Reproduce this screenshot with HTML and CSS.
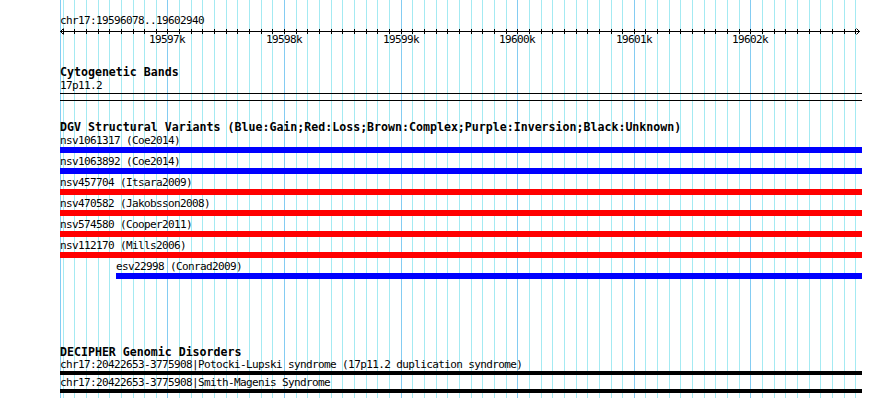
FILE: index.html
```html
<!DOCTYPE html>
<html>

<head>
  <meta charset="UTF-8">
  <title>chr17:19596078..19602940</title>
  <link rel="stylesheet" href="styles.css">
</head>

<body>
  <div class="canvas">
    <!-- grid: one line per 100 bp, darker every 1 kb -->
    <svg class="grid" width="890" height="398">
      <path class="grid-minor" d="M63.5 0V398M74.5 0V398M86.5 0V398M98.5 0V398M109.5 0V398M121.5 0V398M133.5 0V398M144.5 0V398M156.5 0V398M179.5 0V398M191.5 0V398M202.5 0V398M214.5 0V398M226.5 0V398M237.5 0V398M249.5 0V398M261.5 0V398M272.5 0V398M296.5 0V398M307.5 0V398M319.5 0V398M331.5 0V398M342.5 0V398M354.5 0V398M366.5 0V398M377.5 0V398M389.5 0V398M412.5 0V398M424.5 0V398M436.5 0V398M447.5 0V398M459.5 0V398M471.5 0V398M482.5 0V398M494.5 0V398M506.5 0V398M529.5 0V398M541.5 0V398M552.5 0V398M564.5 0V398M576.5 0V398M587.5 0V398M599.5 0V398M611.5 0V398M622.5 0V398M645.5 0V398M657.5 0V398M669.5 0V398M680.5 0V398M692.5 0V398M704.5 0V398M715.5 0V398M727.5 0V398M739.5 0V398M762.5 0V398M774.5 0V398M785.5 0V398M797.5 0V398M809.5 0V398M820.5 0V398M832.5 0V398M844.5 0V398M855.5 0V398" />
      <path class="grid-major" d="M60.5 0V398M167.5 0V398M284.5 0V398M401.5 0V398M517.5 0V398M634.5 0V398M750.5 0V398" />
    </svg>

    <div class="panel">
      <div class="ruler-name">chr17:19596078..19602940</div>
      <svg class="ruler" width="802" height="20">
        <path class="ruler-line" d="M0 5.5H800" />
        <path class="ruler-line" d="M3.5 3V8M14.5 3V8M26.5 3V8M38.5 3V8M49.5 3V8M61.5 3V8M73.5 3V8M84.5 3V8M96.5 3V8M107.5 3V8M119.5 3V8M131.5 3V8M142.5 3V8M154.5 3V8M166.5 3V8M177.5 3V8M189.5 3V8M201.5 3V8M212.5 3V8M224.5 3V8M236.5 3V8M247.5 3V8M259.5 3V8M271.5 3V8M282.5 3V8M294.5 3V8M306.5 3V8M317.5 3V8M329.5 3V8M341.5 3V8M352.5 3V8M364.5 3V8M376.5 3V8M387.5 3V8M399.5 3V8M411.5 3V8M422.5 3V8M434.5 3V8M446.5 3V8M457.5 3V8M469.5 3V8M481.5 3V8M492.5 3V8M504.5 3V8M516.5 3V8M527.5 3V8M539.5 3V8M551.5 3V8M562.5 3V8M574.5 3V8M585.5 3V8M597.5 3V8M609.5 3V8M620.5 3V8M632.5 3V8M644.5 3V8M655.5 3V8M667.5 3V8M679.5 3V8M690.5 3V8M702.5 3V8M714.5 3V8M725.5 3V8M737.5 3V8M749.5 3V8M760.5 3V8M772.5 3V8M784.5 3V8M795.5 3V8" />
        <path class="ruler-line" d="M3.5 2.5L0.5 5.5L3.5 8.5M796.5 2.5L799.5 5.5L796.5 8.5" />
        <text class="ruler-label" x="89" y="17">19597k</text>
        <text class="ruler-label" x="206" y="17">19598k</text>
        <text class="ruler-label" x="323" y="17">19599k</text>
        <text class="ruler-label" x="439" y="17">19600k</text>
        <text class="ruler-label" x="556" y="17">19601k</text>
        <text class="ruler-label" x="672" y="17">19602k</text>
      </svg>

      <section class="track track-bands">
        <h2 class="track-title">Cytogenetic Bands</h2>
        <div class="feature-label">17p11.2</div>
        <div class="band"></div>
      </section>

      <section class="track track-dgv">
        <h2 class="track-title">DGV Structural Variants (Blue:Gain;Red:Loss;Brown:Complex;Purple:Inversion;Black:Unknown)</h2>
        <div class="features">
          <div class="feature">
            <div class="feature-label">nsv1061317 (Coe2014)</div>
            <div class="bar bar-gain"></div>
          </div>
          <div class="feature">
            <div class="feature-label">nsv1063892 (Coe2014)</div>
            <div class="bar bar-gain"></div>
          </div>
          <div class="feature">
            <div class="feature-label">nsv457704 (Itsara2009)</div>
            <div class="bar bar-loss"></div>
          </div>
          <div class="feature">
            <div class="feature-label">nsv470582 (Jakobsson2008)</div>
            <div class="bar bar-loss"></div>
          </div>
          <div class="feature">
            <div class="feature-label">nsv574580 (Cooper2011)</div>
            <div class="bar bar-loss"></div>
          </div>
          <div class="feature">
            <div class="feature-label">nsv112170 (Mills2006)</div>
            <div class="bar bar-loss"></div>
          </div>
          <div class="feature" style="margin-left: 56px">
            <div class="feature-label">esv22998 (Conrad2009)</div>
            <div class="bar bar-gain"></div>
          </div>
        </div>
      </section>

      <section class="track track-decipher">
        <h2 class="track-title">DECIPHER Genomic Disorders</h2>
        <div class="features">
          <div class="feature">
            <div class="feature-label">chr17:20422653-3775908|Potocki-Lupski syndrome (17p11.2 duplication syndrome)</div>
            <div class="bar bar-disorder"></div>
          </div>
          <div class="feature">
            <div class="feature-label">chr17:20422653-3775908|Smith-Magenis Syndrome</div>
            <div class="bar bar-disorder"></div>
          </div>
        </div>
      </section>
    </div>
  </div>
</body>

</html>
```

FILE: styles.css
```css
body {
  margin: 0;
  background-color: #ffffff;
}

.canvas {
  position: relative;
  width: 890px;
  height: 398px;
  overflow: hidden;
  font-family: "DejaVu Sans Mono", "Liberation Mono", monospace;
  color: #000000;
}

.grid {
  position: absolute;
  left: 0;
  top: 0;
}

.grid-minor {
  stroke: #a4eaf2;
  stroke-width: 1;
  fill: none;
}

.grid-major {
  stroke: #84ccf2;
  stroke-width: 1;
  fill: none;
}

.panel {
  position: relative;
  margin-left: 60px;
  width: 802px;
  padding-top: 15px;
}

.ruler-name {
  font-size: 11px;
  letter-spacing: -0.62px;
  line-height: 11px;
  height: 11px;
}

.ruler {
  display: block;
}

.ruler-line {
  stroke: #000000;
  stroke-width: 1;
  fill: none;
}

.ruler-label {
  font-family: "DejaVu Sans Mono", "Liberation Mono", monospace;
  font-size: 11px;
  letter-spacing: -0.62px;
  fill: #000000;
}

.track {
  margin-top: 20px;
}

.track-decipher {
  margin-top: 67px;
}

.track-title {
  margin: 0;
  font-size: 11.6px;
  font-weight: bold;
  line-height: 12px;
  white-space: nowrap;
}

.feature-label {
  font-size: 11px;
  letter-spacing: -0.62px;
  line-height: 11px;
  height: 11px;
  white-space: nowrap;
}

.track-bands .feature-label {
  margin-top: 2px;
}

.band {
  margin-top: 2px;
  height: 6px;
  border-top: 1px solid #000000;
  border-bottom: 1px solid #000000;
}

.features {
  display: flex;
  flex-direction: column;
}

.track-dgv .features {
  margin-top: 2px;
  gap: 3px;
}

.track-decipher .features {
  margin-top: 1px;
  gap: 2px;
}

.bar {
  margin-top: 1px;
  height: 6px;
}

.bar-gain {
  background-color: #0000ff;
}

.bar-loss {
  background-color: #ff0000;
}

.bar-disorder {
  height: 4px;
  background-color: #000000;
}
```
